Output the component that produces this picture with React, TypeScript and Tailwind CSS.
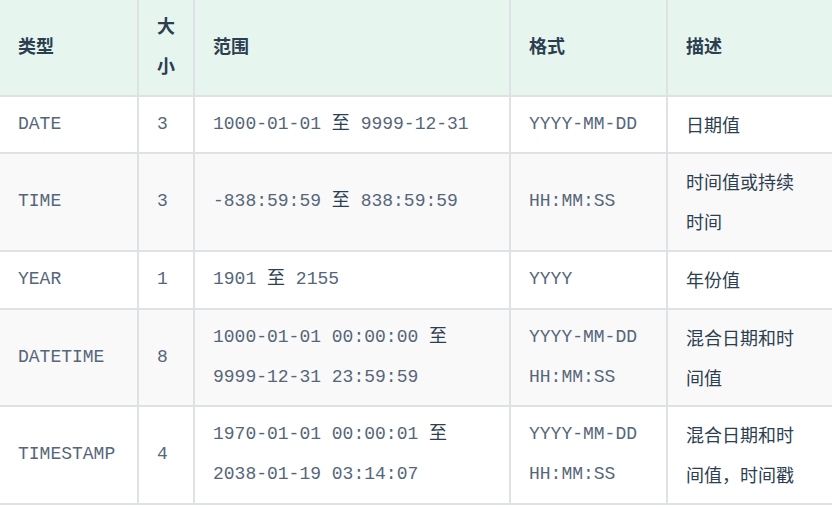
import React from "react";

interface Row {
  type: string;
  size: string;
  range: [string, string];
  format: string[];
  desc: string;
}

const rows: Row[] = [
  { type: "DATE", size: "3", range: ["1000-01-01", "9999-12-31"], format: ["YYYY-MM-DD"], desc: "日期值" },
  { type: "TIME", size: "3", range: ["-838:59:59", "838:59:59"], format: ["HH:MM:SS"], desc: "时间值或持续时间" },
  { type: "YEAR", size: "1", range: ["1901", "2155"], format: ["YYYY"], desc: "年份值" },
  {
    type: "DATETIME",
    size: "8",
    range: ["1000-01-01 00:00:00", "9999-12-31 23:59:59"],
    format: ["YYYY-MM-DD", "HH:MM:SS"],
    desc: "混合日期和时间值",
  },
  {
    type: "TIMESTAMP",
    size: "4",
    range: ["1970-01-01 00:00:01", "2038-01-19 03:14:07"],
    format: ["YYYY-MM-DD", "HH:MM:SS"],
    desc: "混合日期和时间值，时间戳",
  },
];

const headers = ["类型", "大小", "范围", "格式", "描述"];

const cjk = { fontFamily: '"Noto Sans CJK SC", sans-serif' };

export default function App() {
  return (
    <div className="w-[832px] h-[508px] overflow-hidden bg-white">
      <table
        className="table-fixed w-[832px] border-separate border-spacing-0 text-[18px] leading-[39.8px] text-[#56667a]"
        style={{ fontFamily: '"Liberation Mono", "Noto Sans CJK SC", monospace' }}
      >
        <colgroup>
          <col className="w-[139px]" />
          <col className="w-[56px]" />
          <col className="w-[316px]" />
          <col className="w-[157px]" />
          <col className="w-[164px]" />
        </colgroup>
        <thead>
          <tr className="bg-[#e6f6ee]">
            {headers.map((h, i) => (
              <th
                key={h}
                className={`pt-[6px] pb-[9px] pl-[18px] text-left align-middle font-bold text-[#2c3e50] border-b-2 border-[#dfe2e5] ${
                  i < 4 ? "border-r-2 pr-[18px]" : "pr-[30px]"
                }`}
                style={cjk}
              >
                {h}
              </th>
            ))}
          </tr>
        </thead>
        <tbody>
          {rows.map((r, idx) => (
            <tr key={r.type} className={idx % 2 === 1 ? "bg-[#f9f9f9]" : "bg-white"}>
              <td className="py-2 px-[18px] align-middle border-r-2 border-b-2 border-[#dfe2e5]">{r.type}</td>
              <td className="py-2 px-[18px] align-middle border-r-2 border-b-2 border-[#dfe2e5]">{r.size}</td>
              <td className="py-2 px-[18px] align-middle border-r-2 border-b-2 border-[#dfe2e5]">
                {r.range[0]} <span className="text-[#2c3e50]">至</span> {r.range[1]}
              </td>
              <td className="py-2 px-[18px] align-middle border-r-2 border-b-2 border-[#dfe2e5]">
                {r.format.map((f) => (
                  <div key={f}>{f}</div>
                ))}
              </td>
              <td
                className="py-2 pl-[18px] pr-[30px] align-middle text-[#2c3e50] border-b-2 border-[#dfe2e5]"
                style={cjk}
              >
                {r.desc}
              </td>
            </tr>
          ))}
        </tbody>
      </table>
    </div>
  );
}
